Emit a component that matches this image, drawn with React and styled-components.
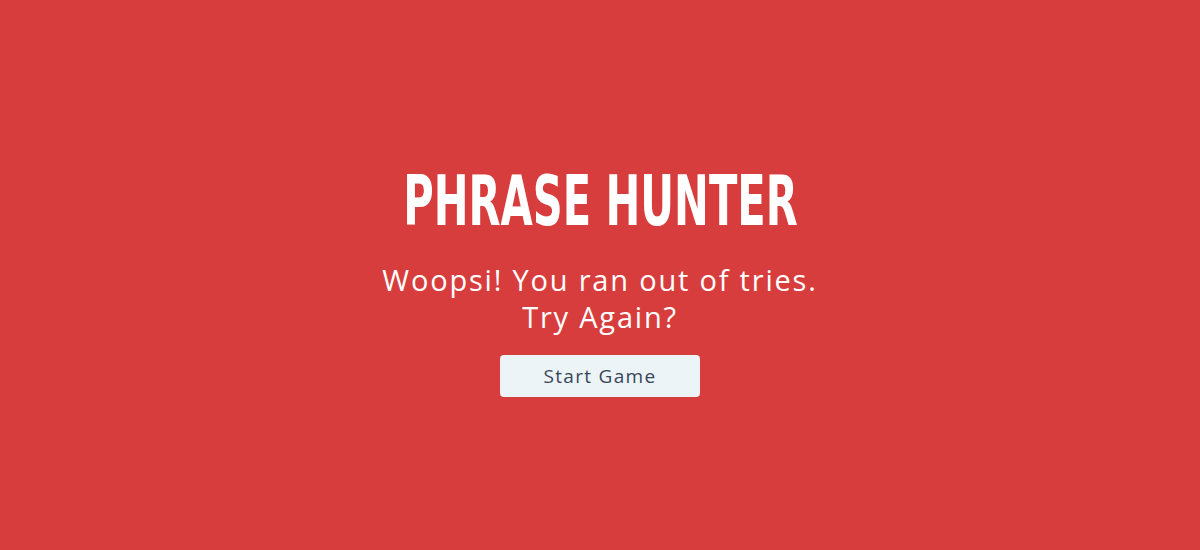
import React from 'react'
import styled, { createGlobalStyle } from 'styled-components';

const GlobalStyle = createGlobalStyle`
  html, body {
    margin: 0;
    padding: 0;
    background: #d83d3d;
  }
`

const Overlay = styled.div`
  width: 1200px;
  height: 550px;
  background: #d83d3d;
  display: flex;
  flex-direction: column;
  align-items: center;
  justify-content: flex-start;
  padding-top: 164px;
  box-sizing: border-box;
`

const Title = styled.h2`
  margin: 0;
  color: #fff;
  font-family: "DejaVu Sans Condensed", "Liberation Sans", sans-serif;
  font-weight: bold;
  font-size: 69px;
  line-height: 74px;
  letter-spacing: 0px;
  transform: scaleX(0.67);
  white-space: nowrap;
`

const Message = styled.h3`
  margin: 23px 0 0 0;
  color: #fff;
  font-family: "Open Sans", sans-serif;
  font-weight: 500;
  font-size: 29px;
  line-height: 37px;
  letter-spacing: 1.8px;
  text-align: center;
`

const StartButton = styled.button`
  margin-top: 20px;
  width: 200px;
  height: 42px;
  border: none;
  border-radius: 4px;
  background: #edf4f8;
  color: #37475a;
  font-family: "Open Sans", sans-serif;
  font-size: 19px;
  letter-spacing: 1.3px;
  cursor: pointer;
`

const App = () => {
  return(
    <>
      <GlobalStyle />
      <Overlay>
        <Title>PHRASE HUNTER</Title>
        <Message>Woopsi! You ran out of tries.<br />Try Again?</Message>
        <StartButton>Start Game</StartButton>
      </Overlay>
    </>
  )
}
export default App;
